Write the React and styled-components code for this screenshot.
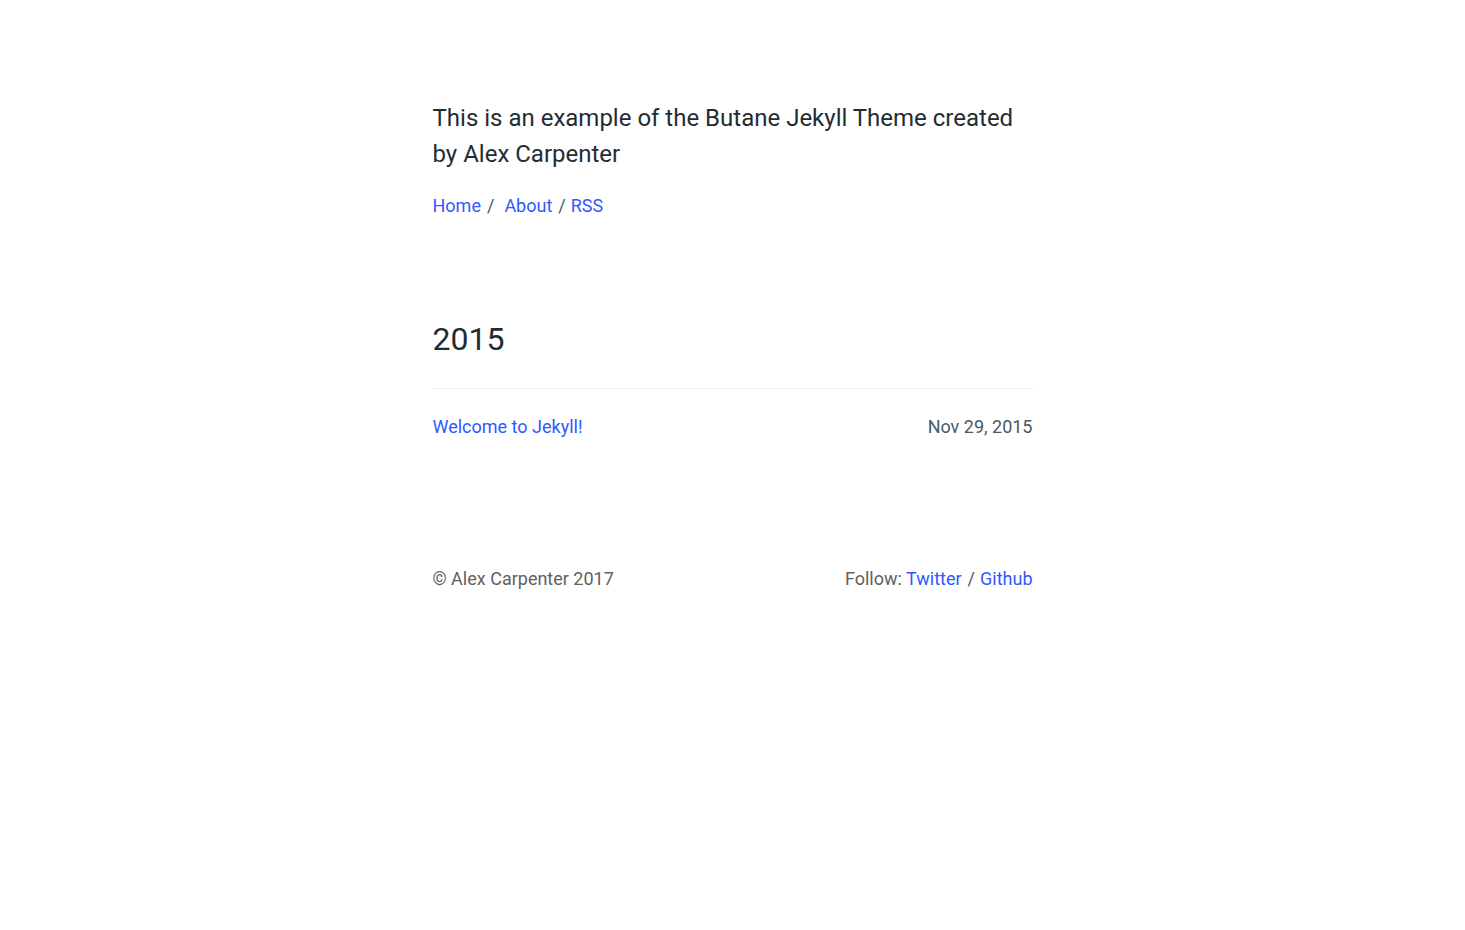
import React from "react";
import styled, { createGlobalStyle } from "styled-components";

const Global = createGlobalStyle`
  html, body { margin: 0; padding: 0; background: #fff; }
  body { font-family: Roboto, "Noto Sans", sans-serif; color: #263238; -webkit-font-smoothing: antialiased; }
  a { text-decoration: none; }
`;

const Container = styled.div`
  width: 600px;
  margin: 0 auto;
  padding-top: 100px;
`;

const Header = styled.header`
  margin-bottom: 100px;
`;

const Tagline = styled.p`
  margin: 0;
  font-size: 24px;
  line-height: 36px;
  font-weight: 400;
  color: #1f2d33;
`;

const Nav = styled.nav`
  margin-top: 21px;
  font-size: 18px;
  line-height: 26px;
  color: #455a64;
`;

const Link = styled.a`
  color: #3058ff;
`;

const Sep = styled.span`
  margin: 0 ${(p) => p.$right ?? 6}px 0 ${(p) => p.$left ?? 6}px;
  color: #455a64;
`;

const Year = styled.h2`
  margin: 0;
  font-size: 32px;
  line-height: 40px;
  font-weight: 400;
  color: #1f2d33;
  padding-bottom: 29px;
  border-bottom: 1px solid #eceff1;
`;

const PostRow = styled.div`
  display: flex;
  justify-content: space-between;
  align-items: baseline;
  margin-top: 25px;
  font-size: 18px;
  line-height: 26px;
`;

const DateText = styled.span`
  color: #455a64;
`;

const Footer = styled.footer`
  display: flex;
  justify-content: space-between;
  margin-top: 126px;
  font-size: 18px;
  line-height: 26px;
  color: #616161;
`;

export default function App() {
  return (
    <>
      <Global />
      <Container>
        <Header>
          <Tagline>This is an example of the Butane Jekyll Theme created by Alex Carpenter</Tagline>
          <Nav>
            <Link href="#">Home</Link>
            <Sep $left={6} $right={10}>/</Sep>
            <Link href="#">About</Link>
            <Sep $left={6} $right={5}>/</Sep>
            <Link href="#">RSS</Link>
          </Nav>
        </Header>
        <Year>2015</Year>
        <PostRow>
          <Link href="#">Welcome to Jekyll!</Link>
          <DateText>Nov 29, 2015</DateText>
        </PostRow>
        <Footer>
          <span>© Alex Carpenter 2017</span>
          <span>
            Follow: <Link href="#">Twitter</Link>
            <Sep $left={6} $right={5}>/</Sep>
            <Link href="#">Github</Link>
          </span>
        </Footer>
      </Container>
    </>
  );
}
